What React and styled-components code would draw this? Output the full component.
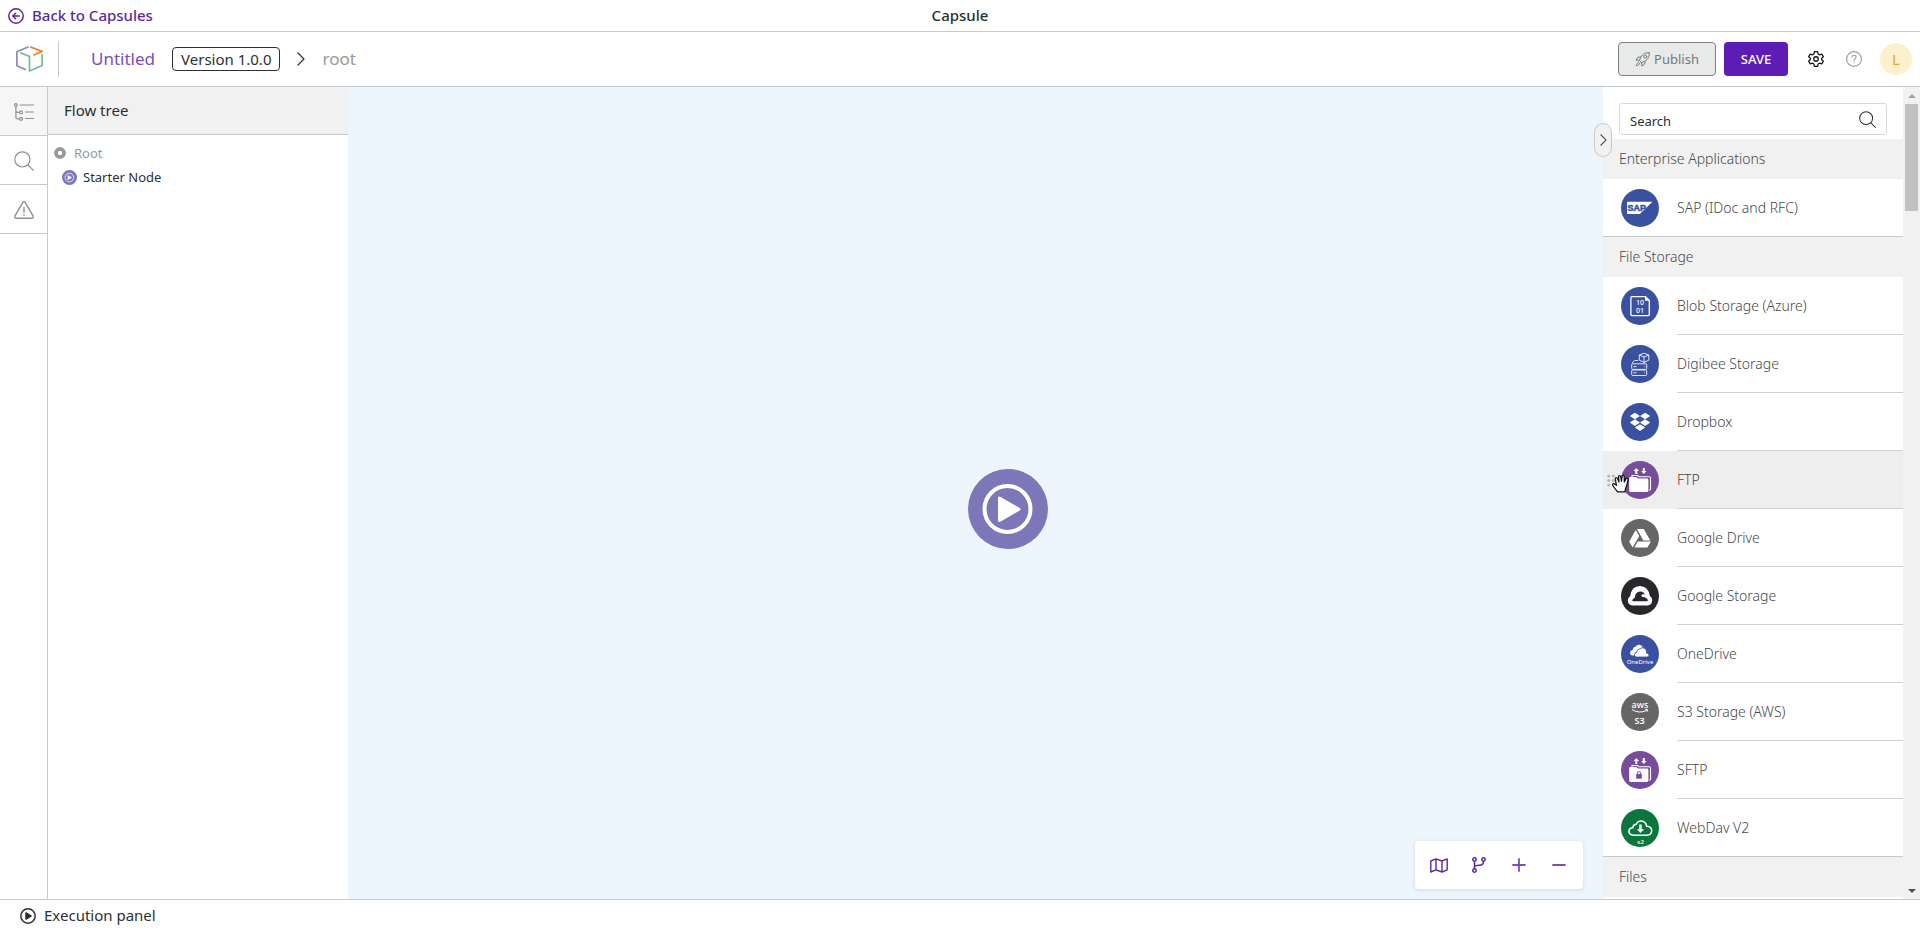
import React from "react";
import styled, { createGlobalStyle, css } from "styled-components";

const color = {
  line: "#c3cbcc",
  rowLine: "#ced2d3",
  band: "#f1f1f1",
  canvas: "#edf5fd",
  ink: "#2b3033",
  text: "#45494c",
  muted: "#969a9b",
  purple: "#5a2a9c",
  violet: "#7c4fb8",
  save: "#5c1cb5",
  node: "#7c77b9",
  blue: "#3a519f",
};

const GlobalStyle = createGlobalStyle`
  *, *::before, *::after { box-sizing: border-box; }
  body {
    margin: 0;
    font-family: "Noto Sans", "Open Sans", sans-serif;
    font-size: 15px;
    color: ${color.ink};
    background: #fff;
  }
  button, input { font: inherit; color: inherit; }
  svg { display: block; flex: none; }
`;

const Page = styled.div`
  display: flex;
  flex-direction: column;
  height: 100vh;
  overflow: hidden;
`;

const TopBar = styled.header`
  display: grid;
  grid-template-columns: 1fr auto 1fr;
  align-items: center;
  height: 32px;
  flex: none;
  padding: 0 8px;
  border-bottom: 1px solid ${color.line};
`;

const Caption = styled.span`
  padding-bottom: 2px;
`;

const BackLink = styled.a`
  display: inline-flex;
  align-items: center;
  gap: 8px;
  justify-self: start;
  color: ${color.purple};
  font-weight: 500;
  text-decoration: none;
`;

const PageTitle = styled.h1`
  margin: 0;
  padding-bottom: 2px;
  font-size: 15px;
  font-weight: 500;
`;

const AppBar = styled.div`
  display: flex;
  align-items: center;
  height: 55px;
  flex: none;
  padding: 0 8px 0 16px;
  border-bottom: 1px solid ${color.line};
`;

const Divider = styled.span`
  width: 1px;
  height: 36px;
  margin: 0 32px 0 15px;
  background: ${color.line};
`;

const Breadcrumb = styled.nav`
  display: flex;
  align-items: center;
  gap: 17px;
  flex: 1;
  font-size: 17px;
`;

const CapsuleName = styled.a`
  padding-bottom: 2px;
  color: ${color.violet};
  text-decoration: none;
`;

const VersionButton = styled.button`
  height: 24px;
  padding: 0 8px;
  border: 1px solid ${color.ink};
  border-radius: 4px;
  background: #fff;
  font-size: 15px;
  line-height: 22px;
  white-space: nowrap;
`;

const Crumb = styled.span`
  padding-bottom: 2px;
  color: ${color.muted};
`;

const Actions = styled.div`
  display: flex;
  align-items: center;
  gap: 8px;
`;

const ActionButton = styled.button`
  display: flex;
  align-items: center;
  justify-content: center;
  gap: 4px;
  width: ${(p) => (p.$primary ? 64 : 98)}px;
  height: 34px;
  padding: 0;
  border-radius: 4px;
  font-size: 13px;
  ${(p) =>
    p.$primary
      ? css`
          border: 0;
          background: ${color.save};
          color: #fff;
          font-weight: 500;
        `
      : css`
          border: 1px solid #7c8081;
          background: #e8e9e9;
          color: #75797a;
        `}
`;

const IconButton = styled.button`
  display: grid;
  place-items: center;
  width: ${(p) => p.$size || 32}px;
  height: ${(p) => p.$size || 32}px;
  padding: 0;
  border: 0;
  background: none;
  color: ${(p) => p.$color || color.ink};
`;

const HeaderIcons = styled.div`
  display: flex;
  align-items: center;
  gap: 6px;
  margin-left: 12px;
`;

const Avatar = styled.button`
  width: 32px;
  height: 32px;
  padding: 0;
  margin-left: 4px;
  border: 0;
  border-radius: 50%;
  background: #fbf2cd;
  color: #dfab2f;
  font-size: 15px;
`;

const Workspace = styled.main`
  display: flex;
  flex: 1;
  min-height: 0;
`;

const Rail = styled.nav`
  width: 48px;
  flex: none;
  border-right: 1px solid ${color.line};
`;

const RailButton = styled.button`
  display: grid;
  place-items: center;
  width: 100%;
  height: 49px;
  padding: 2px 0 0;
  border: 0;
  border-bottom: 1px solid ${color.line};
  background: ${(p) => (p.$active ? "#f6f6f6" : "#fff")};
  color: #8d9192;
`;

const TreePanel = styled.aside`
  width: 300px;
  flex: none;
`;

const TreeHeading = styled.h2`
  margin: 0;
  height: 48px;
  padding-left: 16px;
  border-bottom: 1px solid ${color.line};
  background: ${color.band};
  font-size: 15px;
  font-weight: 400;
  line-height: 47px;
`;

const Tree = styled.ul`
  list-style: none;
  margin: 0;
  padding: 6px;
  font-size: 13px;
`;

const TreeItem = styled.li`
  display: flex;
  align-items: center;
  gap: ${(p) => (p.$child ? 6 : 8)}px;
  height: 24px;
  padding-left: ${(p) => (p.$child ? 8 : 0)}px;
  color: ${(p) => (p.$child ? color.ink : color.muted)};
`;

const Canvas = styled.section`
  position: relative;
  flex: 1;
  min-width: 0;
  background: ${color.canvas};
`;

const FlowNode = styled.button`
  position: absolute;
  left: ${(p) => p.$x}px;
  top: ${(p) => p.$y}px;
  padding: 0;
  border: 0;
  border-radius: 50%;
  background: none;
`;

const CanvasTools = styled.div`
  position: absolute;
  right: 20px;
  bottom: 10px;
  display: flex;
  padding: 4px;
  border-radius: 4px;
  background: #fff;
  box-shadow: 0 1px 4px rgba(60, 80, 110, 0.14);
`;

const CollapseButton = styled.button`
  position: absolute;
  z-index: 1;
  right: -9px;
  top: 36px;
  display: grid;
  place-items: center;
  width: 18px;
  height: 34px;
  padding: 0;
  border: 1px solid ${color.line};
  border-radius: 9px;
  background: ${color.band};
`;

const Palette = styled.aside`
  display: flex;
  width: 317px;
  flex: none;
`;

const PaletteContent = styled.div`
  flex: 1;
  min-width: 0;
  overflow: hidden;
`;

const SearchBox = styled.label`
  display: flex;
  align-items: center;
  height: 32px;
  margin: 16px 16px 4px;
  padding: 0 10px;
  border: 1px solid #d5d9da;
  border-radius: 3px;
`;

const SearchInput = styled.input`
  flex: 1;
  min-width: 0;
  padding: 4px 0 0;
  border: 0;
  outline: 0;
  background: none;
  font-size: 13px;
  &::placeholder { color: ${color.ink}; opacity: 1; }
`;

const Group = styled.section`
  border-bottom: 1px solid ${color.line};
`;

const GroupTitle = styled.h3`
  margin: 0;
  height: 40px;
  padding-left: 16px;
  background: ${color.band};
  color: ${color.text};
  font-size: 14px;
  font-weight: 300;
  line-height: 40px;
`;

const ConnectorList = styled.ul`
  list-style: none;
  margin: 0;
  padding: 0;
`;

const ConnectorRow = styled.li`
  position: relative;
  display: flex;
  align-items: flex-start;
  gap: 18px;
  padding-left: 18px;
  background: ${(p) => (p.$hovered ? "#eee" : "#fff")};
  > svg { margin-top: 10px; }
`;

const ConnectorLabel = styled.span`
  flex: 1;
  height: 58px;
  border-bottom: 1px solid ${color.rowLine};
  color: ${color.text};
  font-size: 14px;
  font-weight: 300;
  line-height: 58px;
  ${ConnectorRow}:last-child & {
    height: 57px;
    border-bottom: 0;
  }
`;

const GrabCursor = styled.span`
  position: absolute;
  left: 4px;
  top: 23px;
`;

const ScrollTrack = styled.div`
  display: flex;
  flex-direction: column;
  width: 17px;
  flex: none;
  background: #f1f1f1;
`;

const ScrollArrow = styled.button`
  display: grid;
  place-items: center;
  height: 17px;
  padding: 0;
  border: 0;
  background: none;
  color: ${(p) => (p.$dim ? "#a3a3a3" : "#505050")};
`;

const ScrollLane = styled.div`
  flex: 1;
  padding: 0 2px;
`;

const ScrollThumb = styled.div`
  height: 107px;
  background: #c1c1c1;
`;

const ExecutionBar = styled.footer`
  display: flex;
  height: 32px;
  flex: none;
  padding: 0 20px;
  border-top: 1px solid ${color.line};
`;

const ExecutionButton = styled.button`
  display: flex;
  align-items: center;
  gap: 8px;
  padding: 0;
  border: 0;
  background: none;
`;

const Stroke = ({ w, h = w, box, sw = 1.3, children }) => (
  <svg width={w} height={h} viewBox={box || `0 0 ${w} ${h}`} fill="none" stroke="currentColor" strokeWidth={sw} strokeLinecap="round" strokeLinejoin="round" aria-hidden="true">
    {children}
  </svg>
);

const BackIcon = () => (
  <Stroke w={16} sw={1.5}>
    <circle cx="8" cy="8" r="7.2" />
    <path d="M11.3 8H5M7.6 5.2 4.8 8l2.8 2.8" />
  </Stroke>
);

const Logo = () => (
  <svg width="27" height="26" viewBox="0 0 27 26" fill="none" strokeWidth="1.7" strokeLinejoin="round" aria-hidden="true">
    <path d="M12.6.8.9 5.8v13.9l9 4" stroke="#8d86c3" />
    <path d="M14.2.9 26.2 5.4 17.2 9.2" stroke="#e8872f" />
    <path d="M4.2 6.8 13.5 10.4V25L26.1 19.5V8.3" stroke="#73b998" />
  </svg>
);

const Chevron = ({ w = 8, h = 14 }) => (
  <Stroke w={w} h={h} box="0 0 8 14" sw={1.2}>
    <path d="m1 1 6 6-6 6" />
  </Stroke>
);

const RocketIcon = () => (
  <Stroke w={15} sw={1}>
    <path d="M14.2.8c-3.600-.2-6.300.8-8.500 4.500L4.500 8.500l2 2 3.200-1.200C13.400 7.100 14.400 4.400 14.200.8Z" />
    <path d="M5.700 5.100 3 5.200 1 8.100l3.300.2M9.900 9.300l-.1 2.700L6.900 14l-.3-3.300" />
    <circle cx="10.300" cy="4.700" r="1.500" />
    <path d="M3.700 10.200C2.200 10.600 1.500 12 1.300 13.700c1.700-.2 3.100-.9 3.500-2.400" />
  </Stroke>
);

const GearIcon = () => (
  <Stroke w={18} box="0 0 24 24" sw={1.7}>
    <path d="M9.900 2.200h4.200l.7 3.100 1.900 1.100 3-1 2.100 3.700-2.300 2.100v1.600l2.300 2.100-2.100 3.700-3-1-1.900 1.100-.7 3.100H9.900l-.7-3.100-1.900-1.100-3 1-2.100-3.700 2.300-2.100v-1.600L2.200 9.100l2.100-3.700 3 1 1.900-1.100z" />
    <circle cx="12" cy="12" r="3" />
  </Stroke>
);

const HelpIcon = () => (
  <Stroke w={16} sw={1.1}>
    <circle cx="8" cy="8" r="7.400" />
    <path d="M5.900 6.200c.1-2.600 4.200-2.500 4.200-.1 0 1.500-2.100 1.600-2.100 3.300M8 11.300v.3" />
  </Stroke>
);

const TreeIcon = () => (
  <Stroke w={20} h={18} sw={1.200}>
    <circle cx="1.900" cy="2" r="1.300" />
    <circle cx="7" cy="9.300" r="1.500" />
    <circle cx="7" cy="15.800" r="1.500" />
    <path d="M1.900 3.500v10.800q0 1.500 1.500 1.500h2M2 7.700q0 1.600 1.500 1.600h2M6 2h13.500M11.500 9h8M11.500 15.500h8" />
  </Stroke>
);

const SearchIcon = ({ size = 20 }) => (
  <Stroke w={size} box="0 0 20 20" sw={1.200}>
    <circle cx="8.400" cy="8.400" r="7.600" />
    <path d="m14 14 5.400 5.400" />
  </Stroke>
);

const WarningIcon = () => (
  <Stroke w={20} h={18} sw={1.400}>
    <path d="M8.700 1.600q1.300-1.600 2.600 0l7.800 13.500q.6 2-1.400 2.200H2.300Q.3 17.100.9 15.100ZM10 6.500v5M10 14v.4" />
  </Stroke>
);

const RootIcon = () => (
  <svg width="12" height="12" viewBox="0 0 12 12" aria-hidden="true">
    <circle cx="6" cy="6" r="4" fill="none" stroke="#97999a" strokeWidth="3.800" />
    <circle cx="6" cy="6" r="1.900" fill="#fff" />
  </svg>
);

const PlayIcon = ({ size }) => (
  <svg width={size} height={size} viewBox="0 0 80 80" aria-hidden="true">
    <circle cx="40" cy="40" r="40" fill={color.node} />
    <circle cx="39.500" cy="40" r="23" fill="none" stroke="#fff" strokeWidth="4" />
    <path d="M31.500 29v22.500L51 40.200Z" fill="#fff" stroke="#fff" strokeWidth="3" strokeLinejoin="round" />
  </svg>
);

const ExecuteIcon = () => (
  <Stroke w={16} sw={1.500}>
    <circle cx="8" cy="8" r="7.200" />
    <path d="M6 5v6l5-3Z" fill="currentColor" />
  </Stroke>
);

const MapIcon = () => (
  <Stroke w={18} h={15} sw={1.400}>
    <path d="M.8 3 6 .9l6 2.100L17.200.9v11L12 14l-6-2.100L.8 14ZM6 .9v11M12 3v11" />
  </Stroke>
);

const BranchIcon = () => (
  <Stroke w={14} h={16} sw={1.500}>
    <circle cx="2.500" cy="2.500" r="1.700" />
    <circle cx="2.500" cy="13.500" r="1.700" />
    <circle cx="11.500" cy="2.500" r="1.700" />
    <path d="M2.500 4.500v7M11.500 4.500q0 3.700-4 3.700-5 0-5 2" />
  </Stroke>
);

const PlusIcon = () => (
  <Stroke w={14} sw={1.800}><path d="M7 1v12M1 7h12" /></Stroke>
);

const MinusIcon = () => (
  <Stroke w={14} sw={1.800}><path d="M1 7h12" /></Stroke>
);

const Disc = ({ fill, children }) => (
  <svg width="38" height="38" viewBox="0 0 38 38" aria-hidden="true">
    <circle cx="19" cy="19" r="19" fill={fill} />
    {children}
  </svg>
);

const Folders = ({ locked }) => (
  <Disc fill="#774c9b">
    <path d="M15.300 7 18 9.900h-1.700V13h-2V9.900h-1.700ZM22.800 13l-2.700-2.900h1.700V7h2v3.100h1.700Z" fill="#fff" />
    <path d="M11 16.500v-2h5.500l1.500 1.300h10.200q1.300 0 1.300 1.300V28q0 1.200-1.200 1.400" fill="none" stroke="#fff" strokeWidth="1.100" />
    <path d="M8.200 17.300q0-1.300 1.300-1.300h5.800l1.700 1.500h9q1.400 0 1.400 1.400v10.700q0 1.400-1.400 1.400H9.600q-1.400 0-1.400-1.400Z" fill="#fff" />
    {locked && (
      <g>
        <rect x="15.200" y="23" width="5.600" height="4.700" fill="#774c9b" />
        <path d="M16.200 23v-.8q.1-1.500 1.800-1.500t1.800 1.500v.8" fill="none" stroke="#774c9b" />
      </g>
    )}
  </Disc>
);

const icons = {
  sap: (
    <Disc fill={color.blue}>
      <path d="M6 12.700h25.500L18.800 25H6Z" fill="#fff" />
      <text x="6.500" y="22.300" fontFamily="Liberation Sans, sans-serif" fontWeight="700" fontSize="9" fill={color.blue} stroke={color.blue} strokeWidth=".5">SAP</text>
    </Disc>
  ),
  blob: (
    <Disc fill={color.blue}>
      <path d="M24.500 9.700H10.900q-1 0-1 1v16.900q0 1 1 1h16.400q1 0 1-1V13.500Z" fill="none" stroke="#fff" strokeWidth="1.300" />
      <path d="M24 9.500v4.300h4.500Z" fill="#fff" />
      <g fontFamily="Noto Sans, sans-serif" fontSize="7" fontWeight="500" fill="#fff">
        <text x="15" y="18">10</text>
        <text x="15" y="25.800">01</text>
      </g>
    </Disc>
  ),
  digibee: (
    <Disc fill={color.blue}>
      <g fill="none" stroke="#e3e8f6" strokeWidth="1" strokeLinejoin="round">
        <rect x="10.700" y="18.800" width="15" height="5.600" rx="1" />
        <rect x="10.700" y="25" width="15" height="5.500" rx="1" />
        <path d="M12.500 21.600h3M23 21.600h.6M12.500 27.800h3M23 27.800h.6M11.200 18l1.700-2q.4-.5 1.200-.5h3M24.500 18.300l-.8-1" />
        <path d="m23 8.200 4.800 1.800v5.200L23 17.300l-4.700-2.100V10ZM18.300 10l4.700 2 4.800-2M23 12v5.300" />
      </g>
    </Disc>
  ),
  dropbox: (
    <Disc fill={color.blue}>
      <path d="m13.900 9.700 5.100 3.300-5.100 3.300L8.800 13ZM24.100 9.700l5.100 3.300-5.100 3.300L19 13ZM13.900 16.300l5.100 3.300-5.100 3.300-5.100-3.300ZM24.100 16.300l5.100 3.300-5.100 3.300-5.100-3.300ZM19 21.300l5.100 3.300L19 27.900l-5.100-3.300Z" fill="#fff" />
    </Disc>
  ),
  ftp: <Folders />,
  drive: (
    <Disc fill="#666">
      <path transform="translate(7 7.500)" d="M7.700 3.500 1.200 15l3.400 6 6.600-11.500ZM9.700 15l-3.400 6h13.100l3.500-6ZM22.300 14 15.700 2.500H8.900L15.400 14Z" fill="#fff" />
    </Disc>
  ),
  gcs: (
    <Disc fill="#27272c">
      <path d="M11.500 28.500Q7 28 6.800 23.600q.1-3 2.400-4.500Q10.500 9.200 18.800 9q8.400.2 10 9.800 2.500 1.700 2.400 4.800-.3 4.400-4.700 4.900Z" fill="#fff" />
      <path d="M11.300 23.600q.1-2.100 2.300-2.600.6-6.300 5.600-6.600 3.600 0 4.500 3.200-3-.8-3.400.9.400 2.300 3.200 1.600l1.300.9q2 .4 2 2.600-.1.600-.7.600H12q-.7 0-.7-.6Z" fill="#27272c" />
    </Disc>
  ),
  onedrive: (
    <Disc fill={color.blue}>
      <path d="M11.500 20.500q-2.600-.4-2.500-2.800.3-2.500 2.700-2.600.1-3 3-3.600 1.300-2.100 4-1.700 2 .3 3 2l-2 1.500q-3 .8-3.500 3.500-3 1-2.700 3.700Z" fill="#fff" />
      <path d="M15.500 22q-2.300-.2-2.200-2.200.2-2 2.200-2.200.3-3.700 3.900-4 2.500-2.300 5.100.4 1.700 1.700 1 4 2.600.5 2.500 2.200-.2 1.700-2 1.800Z" fill="#fff" stroke={color.blue} strokeWidth=".8" />
      <text x="19" y="28.500" textAnchor="middle" fontFamily="Noto Sans, sans-serif" fontSize="6" fill="#fff">OneDrive</text>
    </Disc>
  ),
  s3: (
    <Disc fill="#666">
      <text x="19" y="14.500" textAnchor="middle" fontFamily="Noto Sans, sans-serif" fontSize="9" fontWeight="500" fill="#fff">aws</text>
      <path d="M11 16.500q7 4.500 14.500 1M24.200 16.500h2.300l-.5 2.300" fill="none" stroke="#fff" strokeWidth="1" />
      <text x="18.500" y="30.500" textAnchor="middle" fontFamily="Noto Sans, sans-serif" fontSize="9" fontWeight="600" fill="#fff">S3</text>
    </Disc>
  ),
  sftp: <Folders locked />,
  webdav: (
    <Disc fill="#0b773d">
      <path d="M12.500 26.200q-4.400-.3-4.600-3.800.2-3.500 3.900-3.700.4-3.200 3.300-3.400 1.500-3.500 5.200-3.400 4.600.4 5.400 5.300 5 .2 5 4.500-.3 4.300-4.700 4.500Z" fill="none" stroke="#fff" strokeWidth="1.500" />
      <path d="M18.200 15.500h2.500v4.700h2.400L19.500 24l-3.700-3.800h2.400Z" fill="#fff" />
      <text x="19.500" y="35" textAnchor="middle" fontFamily="Liberation Sans, sans-serif" fontSize="5" fontWeight="700" fill="#fff">v.2</text>
    </Disc>
  ),
};

const GrabHand = () => (
  <svg width="24" height="20" viewBox="0 0 24 20" aria-hidden="true">
    <g fill="#b9b9b9">
      <circle cx="1.700" cy="2" r="1.600" />
      <circle cx="6.300" cy="2" r="1.600" />
      <circle cx="1.700" cy="6.500" r="1.600" />
      <circle cx="6.300" cy="6.500" r="1.600" />
      <circle cx="1.700" cy="11" r="1.600" />
    </g>
    <path d="M10.500 17.800 5.700 11.500q-.6-2 1.400-1.900l2.400 1.700L8.300 5q.2-1.900 1.900-.9l1.800 4L11.500 2.600q.6-1.800 2-.5l1 5.200.6-5.300q1.300-1.300 2.100.2l.1 5.800 1.900-3.600q1.800-.7 1.900 1l-1.300 5.900-1.300 3.500-.6 3Z" fill="#f7fbff" stroke="#111" strokeWidth="1.200" strokeLinejoin="round" />
  </svg>
);

const groups = [
  { title: "Enterprise Applications", items: [["sap", "SAP (IDoc and RFC)"]] },
  {
    title: "File Storage",
    items: [
      ["blob", "Blob Storage (Azure)"],
      ["digibee", "Digibee Storage"],
      ["dropbox", "Dropbox"],
      ["ftp", "FTP"],
      ["drive", "Google Drive"],
      ["gcs", "Google Storage"],
      ["onedrive", "OneDrive"],
      ["s3", "S3 Storage (AWS)"],
      ["sftp", "SFTP"],
      ["webdav", "WebDav V2"],
    ],
  },
];

export default function App() {
  const hovered = "ftp";
  return (
    <Page>
      <GlobalStyle />
      <TopBar>
        <BackLink href="#capsules"><BackIcon /><Caption>Back to Capsules</Caption></BackLink>
        <PageTitle>Capsule</PageTitle>
      </TopBar>
      <AppBar>
        <Logo />
        <Divider />
        <Breadcrumb aria-label="Breadcrumb">
          <CapsuleName href="#capsule">Untitled</CapsuleName>
          <VersionButton type="button">Version 1.0.0</VersionButton>
          <Chevron />
          <Crumb>root</Crumb>
        </Breadcrumb>
        <Actions>
          <ActionButton type="button" disabled><RocketIcon />Publish</ActionButton>
          <ActionButton type="button" $primary>SAVE</ActionButton>
        </Actions>
        <HeaderIcons>
          <IconButton type="button" aria-label="Settings" $color="#111"><GearIcon /></IconButton>
          <IconButton type="button" aria-label="Help" $color="#9a9d9e"><HelpIcon /></IconButton>
          <Avatar type="button">L</Avatar>
        </HeaderIcons>
      </AppBar>
      <Workspace>
        <Rail aria-label="Views">
          <RailButton type="button" aria-label="Flow tree" $active><TreeIcon /></RailButton>
          <RailButton type="button" aria-label="Search"><SearchIcon /></RailButton>
          <RailButton type="button" aria-label="Warnings"><WarningIcon /></RailButton>
        </Rail>
        <TreePanel>
          <TreeHeading>Flow tree</TreeHeading>
          <Tree>
            <TreeItem><RootIcon />Root</TreeItem>
            <TreeItem $child><PlayIcon size={15} />Starter Node</TreeItem>
          </Tree>
        </TreePanel>
        <Canvas aria-label="Flow canvas">
          <FlowNode type="button" aria-label="Starter Node" $x={620} $y={382}><PlayIcon size={80} /></FlowNode>
          <CanvasTools>
            <IconButton type="button" $size={40} $color={color.purple} aria-label="Map"><MapIcon /></IconButton>
            <IconButton type="button" $size={40} $color={color.purple} aria-label="Branches"><BranchIcon /></IconButton>
            <IconButton type="button" $size={40} $color={color.violet} aria-label="Zoom in"><PlusIcon /></IconButton>
            <IconButton type="button" $size={40} $color={color.violet} aria-label="Zoom out"><MinusIcon /></IconButton>
          </CanvasTools>
          <CollapseButton type="button" aria-label="Collapse palette"><Chevron w={7} h={12} /></CollapseButton>
        </Canvas>
        <Palette>
          <PaletteContent>
            <SearchBox>
              <SearchInput type="text" placeholder="Search" aria-label="Search components" />
              <SearchIcon size={17} />
            </SearchBox>
            {groups.map((g) => (
              <Group key={g.title}>
                <GroupTitle>{g.title}</GroupTitle>
                <ConnectorList>
                  {g.items.map(([id, label]) => (
                    <ConnectorRow key={id} $hovered={id === hovered}>
                      {icons[id]}
                      <ConnectorLabel>{label}</ConnectorLabel>
                      {id === hovered && <GrabCursor><GrabHand /></GrabCursor>}
                    </ConnectorRow>
                  ))}
                </ConnectorList>
              </Group>
            ))}
            <GroupTitle>Files</GroupTitle>
          </PaletteContent>
          <ScrollTrack>
            <ScrollArrow type="button" aria-label="Scroll up" $dim>
              <svg width="8" height="4" viewBox="0 0 8 4"><path d="M0 4 4 0l4 4Z" fill="currentColor" /></svg>
            </ScrollArrow>
            <ScrollLane><ScrollThumb /></ScrollLane>
            <ScrollArrow type="button" aria-label="Scroll down">
              <svg width="8" height="4" viewBox="0 0 8 4"><path d="M0 0h8L4 4Z" fill="currentColor" /></svg>
            </ScrollArrow>
          </ScrollTrack>
        </Palette>
      </Workspace>
      <ExecutionBar>
        <ExecutionButton type="button"><ExecuteIcon /><Caption>Execution panel</Caption></ExecutionButton>
      </ExecutionBar>
    </Page>
  );
}
